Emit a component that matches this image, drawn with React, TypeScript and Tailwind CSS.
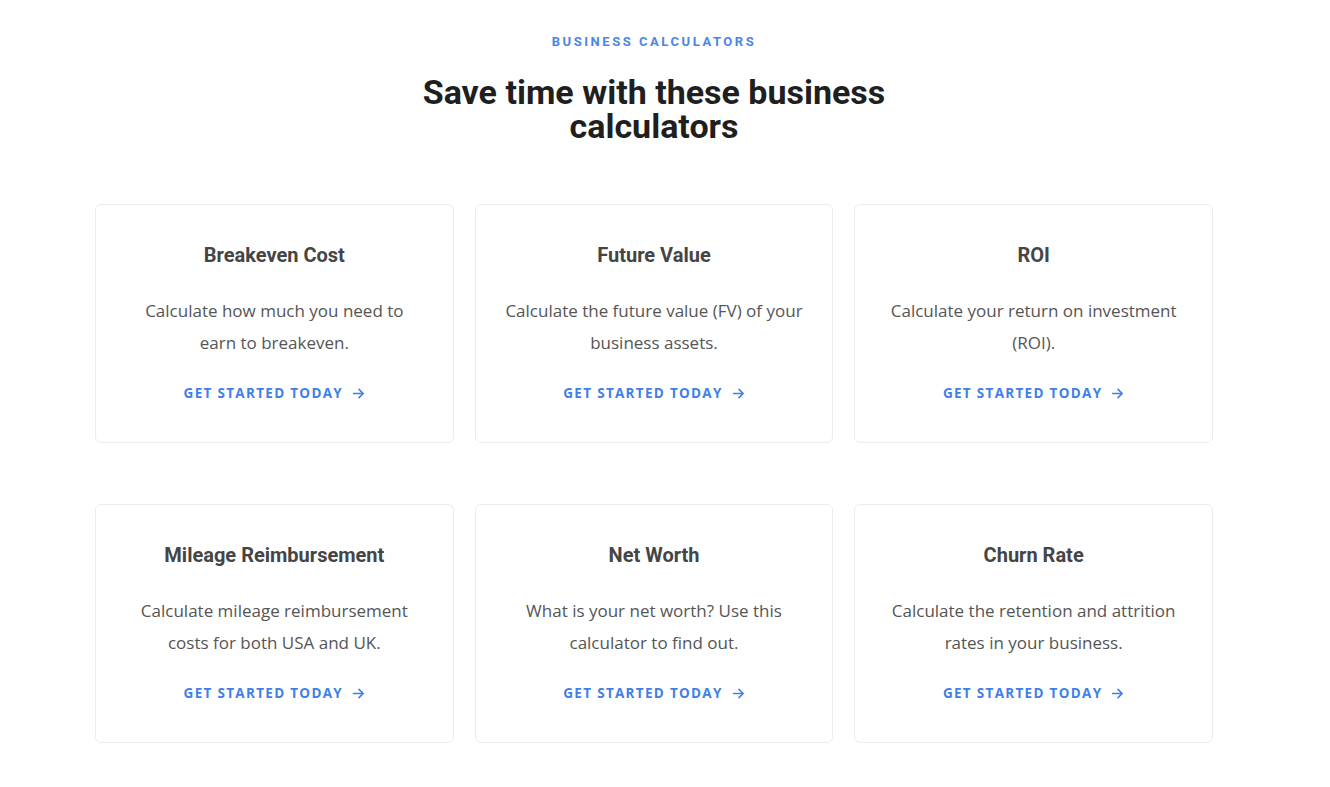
const calculators = [
  { title: "Breakeven Cost", text: "Calculate how much you need to earn to breakeven." },
  { title: "Future Value", text: "Calculate the future value (FV) of your business assets." },
  { title: "ROI", text: "Calculate your return on investment (ROI)." },
  { title: "Mileage Reimbursement", text: "Calculate mileage reimbursement costs for both USA and UK." },
  { title: "Net Worth", text: "What is your net worth? Use this calculator to find out." },
  { title: "Churn Rate", text: "Calculate the retention and attrition rates in your business." },
];

function Arrow() {
  return (
    <svg width="13" height="13" viewBox="0 0 24 24" fill="none" stroke="currentColor" strokeWidth="3" strokeLinecap="round" strokeLinejoin="round">
      <path d="M3 12h17" />
      <path d="M13 4.5l7.5 7.5-7.5 7.5" />
    </svg>
  );
}

export default function App() {
  return (
    <section className="min-h-[787px] bg-white pb-10 pl-[95px] pt-[34px] font-['Open_Sans',sans-serif]">
      <div className="w-[1118px]">
        <p className="text-center font-['Roboto',sans-serif] text-[13px] font-bold leading-4 tracking-[2.55px] text-[#4a86e8]">
          BUSINESS CALCULATORS
        </p>
        <h2 className="mx-auto mt-[25px] max-w-[490px] text-center font-['Roboto',sans-serif] text-[34px] font-bold leading-[34px] text-[#1f1f1f]">
          Save time with these business calculators
        </h2>
        <div className="mt-[61px] grid grid-cols-3 gap-x-[21px] gap-y-[61px]">
          {calculators.map((c) => (
            <div
              key={c.title}
              className="flex h-[239px] flex-col items-center rounded-[6px] border border-[#ececec] px-[20px] pt-[38px] text-center"
            >
              <h3 className="font-['Roboto',sans-serif] text-[20px] font-bold leading-6 text-[#454545]">{c.title}</h3>
              <p className="mt-[28px] max-w-[298px] text-[17px] leading-[32px] text-[#555]">{c.text}</p>
              <a href="#" className="mt-[24px] flex items-center gap-[9px] text-[13.5px] font-bold leading-5 tracking-[1.3px] text-[#3f7fe8]">
                GET STARTED TODAY
                <Arrow />
              </a>
            </div>
          ))}
        </div>
      </div>
    </section>
  );
}
